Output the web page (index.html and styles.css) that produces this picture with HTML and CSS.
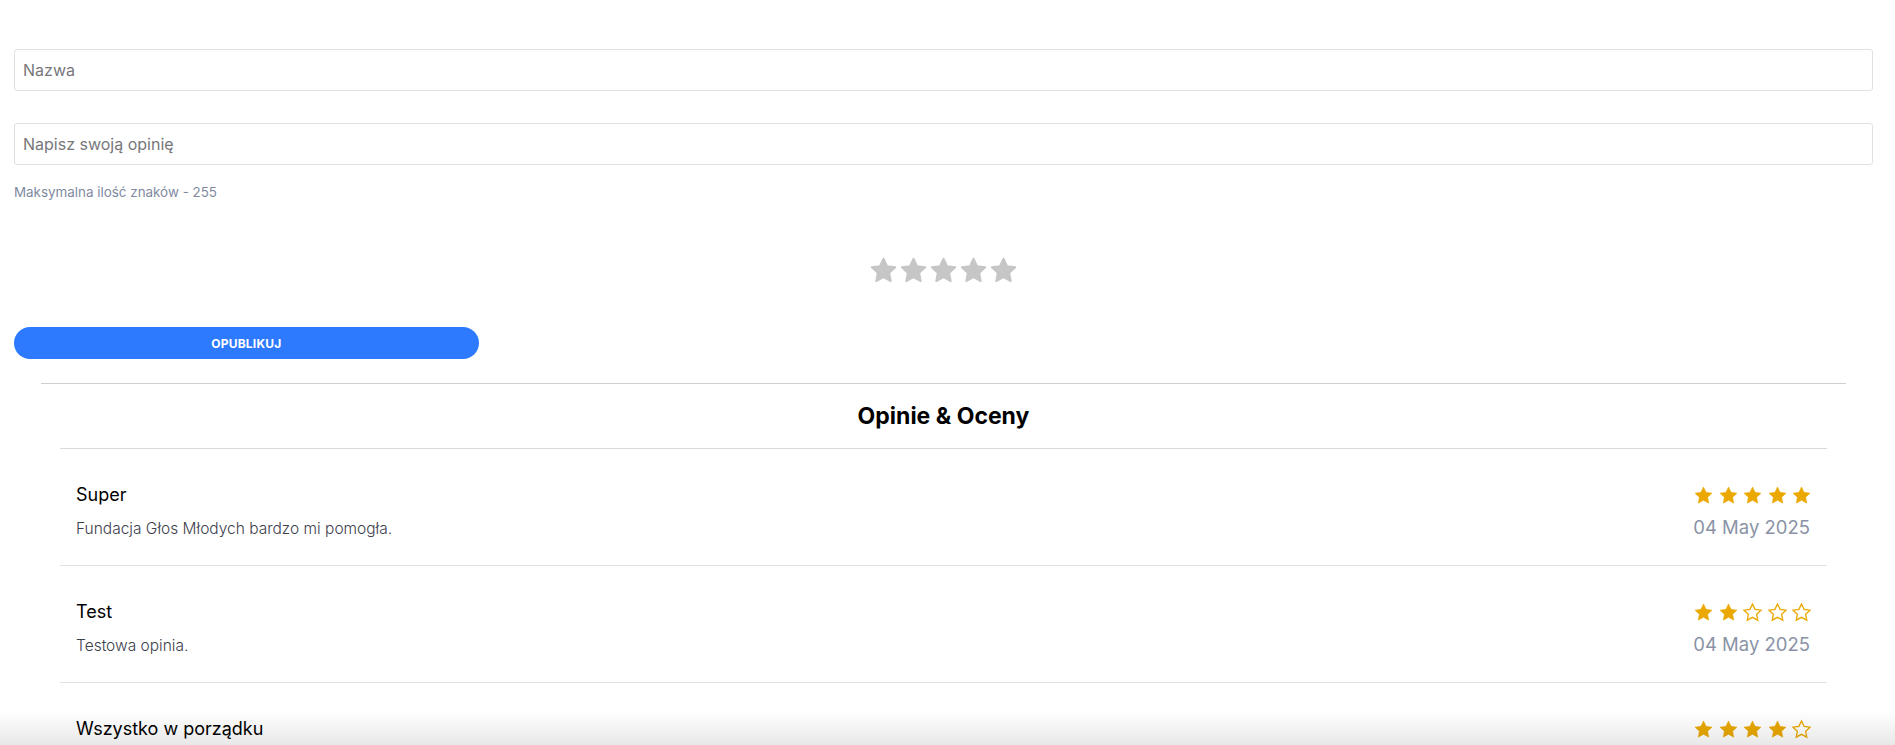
FILE: index.html
```html
<!DOCTYPE html>
<html lang="pl">
<head>
<meta charset="utf-8">
<title>Opinie</title>
<link rel="stylesheet" href="styles.css">
</head>
<body>
<svg width="0" height="0" class="defs" aria-hidden="true">
  <defs>
    <path id="star" d="M12 2.2l2.95 6.2 6.75.9-4.95 4.7 1.25 6.75L12 17.5l-6 3.25 1.25-6.75L2.3 9.3l6.75-.9z"/>
  </defs>
</svg>
<main class="page">
  <form class="form">
    <input class="field" type="text" placeholder="Nazwa">
    <input class="field field-gap" type="text" placeholder="Napisz swoją opinię">
    <p class="hint">Maksymalna ilość znaków - 255</p>
    <div class="rate">
      <svg class="rate-star" viewBox="0 0 24 24"><use href="#star"/></svg>
      <svg class="rate-star" viewBox="0 0 24 24"><use href="#star"/></svg>
      <svg class="rate-star" viewBox="0 0 24 24"><use href="#star"/></svg>
      <svg class="rate-star" viewBox="0 0 24 24"><use href="#star"/></svg>
      <svg class="rate-star" viewBox="0 0 24 24"><use href="#star"/></svg>
    </div>
    <button class="publish" type="button">OPUBLIKUJ</button>
  </form>

  <section class="reviews">
    <h2 class="reviews-title">Opinie &amp; Oceny</h2>
    <ul class="list">
      <li class="item">
        <div class="item-text">
          <h3 class="item-name">Super</h3>
          <p class="item-desc">Fundacja Głos Młodych bardzo mi pomogła.</p>
        </div>
        <div class="item-meta">
          <div class="stars">
            <svg class="s on" viewBox="0 0 24 24"><use href="#star"/></svg>
            <svg class="s on" viewBox="0 0 24 24"><use href="#star"/></svg>
            <svg class="s on" viewBox="0 0 24 24"><use href="#star"/></svg>
            <svg class="s on" viewBox="0 0 24 24"><use href="#star"/></svg>
            <svg class="s on" viewBox="0 0 24 24"><use href="#star"/></svg>
          </div>
          <div class="date">04 May 2025</div>
        </div>
      </li>
      <li class="item">
        <div class="item-text">
          <h3 class="item-name">Test</h3>
          <p class="item-desc">Testowa opinia.</p>
        </div>
        <div class="item-meta">
          <div class="stars">
            <svg class="s on" viewBox="0 0 24 24"><use href="#star"/></svg>
            <svg class="s on" viewBox="0 0 24 24"><use href="#star"/></svg>
            <svg class="s off" viewBox="0 0 24 24"><use href="#star"/></svg>
            <svg class="s off" viewBox="0 0 24 24"><use href="#star"/></svg>
            <svg class="s off" viewBox="0 0 24 24"><use href="#star"/></svg>
          </div>
          <div class="date">04 May 2025</div>
        </div>
      </li>
      <li class="item">
        <div class="item-text">
          <h3 class="item-name">Wszystko w porządku</h3>
        </div>
        <div class="item-meta">
          <div class="stars">
            <svg class="s on" viewBox="0 0 24 24"><use href="#star"/></svg>
            <svg class="s on" viewBox="0 0 24 24"><use href="#star"/></svg>
            <svg class="s on" viewBox="0 0 24 24"><use href="#star"/></svg>
            <svg class="s on" viewBox="0 0 24 24"><use href="#star"/></svg>
            <svg class="s off" viewBox="0 0 24 24"><use href="#star"/></svg>
          </div>
        </div>
      </li>
    </ul>
  </section>
</main>
<div class="fade"></div>
</body>
</html>
```

FILE: styles.css
```css
* { box-sizing: border-box; }

html, body {
  margin: 0;
  padding: 0;
  background: #ffffff;
  font-family: Inter, "Noto Sans", "DejaVu Sans", sans-serif;
  color: #000;
}

body { height: 745px; overflow: hidden; }

.defs { position: absolute; width: 0; height: 0; overflow: hidden; }

.page { padding-top: 49px; }

.form {
  display: flex;
  flex-direction: column;
  margin: 0 22px 0 14px;
}

.field {
  display: block;
  width: 100%;
  height: 42px;
  border: 1px solid #e1e1e3;
  border-radius: 3px;
  padding: 0 8px;
  font-family: inherit;
  font-size: 16px;
  color: #222;
  background: #fff;
  outline: none;
}
.field::placeholder { color: #77777b; }
.field-gap { margin-top: 32px; }

.hint {
  margin: 18px 0 0;
  font-size: 13.4px;
  line-height: 18px;
  color: #7f8aa0;
}

.rate {
  display: flex;
  justify-content: center;
  gap: 1px;
  height: 30px;
  margin-top: 55px;
}
.rate-star {
  width: 29px;
  height: 29px;
  fill: #c6c6c6;
  stroke: #c6c6c6;
  stroke-width: 1.6;
  stroke-linejoin: round;
}

.publish {
  margin-top: 41px;
  width: 25%;
  height: 32px;
  border: 0;
  border-radius: 16px;
  background: #2d7aff;
  color: #fff;
  font-family: inherit;
  font-size: 12px;
  font-weight: 700;
  letter-spacing: 0.2px;
}

.reviews {
  margin: 24px 49px 0 41px;
  border-top: 1px solid #cfcfd1;
}

.reviews-title {
  margin: 0;
  height: 64px;
  line-height: 64px;
  text-align: center;
  font-size: 23px;
  font-weight: 700;
  color: #000;
}

.list {
  list-style: none;
  margin: 0 19px;
  padding: 0;
  border-top: 1px solid #d9d9de;
}

.item {
  display: flex;
  justify-content: space-between;
  align-items: flex-start;
  height: 117px;
  padding: 34px 17px 0 16px;
  border-bottom: 1px solid #e1e1e6;
}

.item-name {
  margin: 0;
  font-size: 18px;
  line-height: 24px;
  font-weight: 400;
  color: #000;
}

.item-desc {
  margin: 10px 0 0;
  font-size: 15.5px;
  line-height: 24px;
  font-weight: 300;
  color: #3b404d;
}

.item-meta {
  display: flex;
  flex-direction: column;
  align-items: flex-end;
}

.stars {
  display: flex;
  gap: 3.5px;
  height: 24px;
  align-items: center;
  margin-right: -2px;
}
.s {
  width: 21px;
  height: 21px;
  stroke: #eaa800;
  stroke-linejoin: miter;
}
.s.on { fill: #eaa800; stroke-width: 0.6; }
.s.off { fill: #fff; stroke-width: 1.5; }

.date {
  margin-top: 6px;
  font-size: 18.5px;
  line-height: 28px;
  color: #8a93a5;
}

.fade {
  position: fixed;
  left: 0;
  right: 0;
  bottom: 0;
  height: 34px;
  background: linear-gradient(to bottom, rgba(255,255,255,1), rgba(232,232,232,1));
  mix-blend-mode: multiply;
  pointer-events: none;
}
```
